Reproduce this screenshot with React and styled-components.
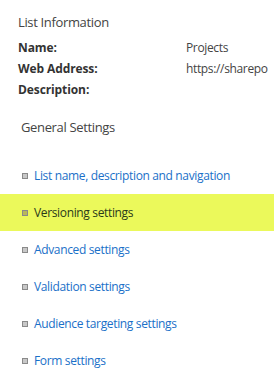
import styled, { createGlobalStyle } from 'styled-components';

const GlobalStyle = createGlobalStyle`
  body {
    margin: 0;
    background: #fff;
    font-family: "Open Sans", "Noto Sans", sans-serif;
  }
`;

const Page = styled.div`
  width: 274px;
  height: 385px;
  overflow: hidden;
  padding-top: 13px;
  box-sizing: border-box;
  font-size: 12px;
  letter-spacing: -0.35px;
`;

const Heading = styled.div`
  padding-left: 18px;
  font-size: 13px;
  line-height: 19px;
  color: #444;
`;

const InfoTable = styled.div`
  display: grid;
  grid-template-columns: 168px 88px;
  padding: 5px 0 0 18px;
  line-height: 21px;
  white-space: nowrap;
`;

const Label = styled.div`
  font-weight: 700;
  color: #333;
  letter-spacing: -0.1px;
`;

const Value = styled.div`
  color: #444;
  overflow: hidden;
`;

const SectionTitle = styled.div`
  padding: 18px 0 0 21px;
  font-size: 13px;
  line-height: 19px;
  color: #444;
`;

const LinkList = styled.ul`
  list-style: none;
  margin: 0;
  padding: 20px 0 0;
`;

const LinkRow = styled.li`
  display: flex;
  align-items: center;
  height: 37px;
  padding-left: 22px;
  background: ${(p) => (p.$active ? '#ebf95b' : 'transparent')};
`;

const Bullet = styled.span`
  width: 4px;
  height: 4px;
  border: 1px solid #8a8a8a;
  background: ${(p) => (p.$active ? '#b8b85a' : '#c8c8c8')};
  margin-right: 6px;
  flex-shrink: 0;
`;

const LinkText = styled.a`
  color: ${(p) => (p.$active ? '#2a3a1a' : '#1a70c8')};
  text-decoration: none;
  white-space: nowrap;
`;

const links = [
  'List name, description and navigation',
  'Versioning settings',
  'Advanced settings',
  'Validation settings',
  'Audience targeting settings',
  'Form settings',
];

export default function App() {
  return (
    <Page>
      <GlobalStyle />
      <Heading>List Information</Heading>
      <InfoTable>
        <Label>Name:</Label>
        <Value>Projects</Value>
        <Label>Web Address:</Label>
        <Value>https://sharepo</Value>
        <Label>Description:</Label>
        <Value></Value>
      </InfoTable>
      <SectionTitle>General Settings</SectionTitle>
      <LinkList>
        {links.map((text, i) => (
          <LinkRow key={text} $active={i === 1}>
            <Bullet $active={i === 1} />
            <LinkText href="#" $active={i === 1}>{text}</LinkText>
          </LinkRow>
        ))}
      </LinkList>
    </Page>
  );
}
